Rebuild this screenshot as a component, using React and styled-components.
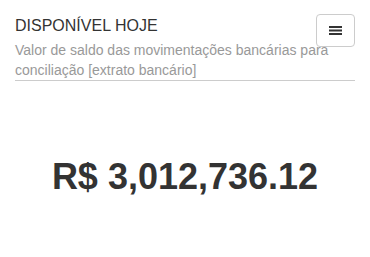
import * as React from 'react'
import styled, { createGlobalStyle } from 'styled-components'

const GlobalStyle = createGlobalStyle`
  html, body {
    margin: 0;
    padding: 0;
    background: #fff;
    font-family: "Liberation Sans", Arial, Helvetica, sans-serif;
    color: #333;
  }
`

const Panel = styled.section`
  padding: 10px 15px;
`

const Header = styled.header`
  position: relative;
  border-bottom: 1px solid #ccc;
  padding-top: 6px;
`

const Title = styled.h3`
  margin: 0;
  font-size: 16px;
  font-weight: 400;
  line-height: 20px;
  color: #333;
`

const Subtitle = styled.p`
  margin: 4px 0 0;
  font-size: 14px;
  line-height: 20px;
  color: #999;
`

const MenuButton = styled.button`
  position: absolute;
  top: 4px;
  right: 0;
  width: 39px;
  height: 33px;
  display: flex;
  align-items: center;
  justify-content: center;
  background: #fff;
  border: 1px solid #ccc;
  border-radius: 4px;
  padding: 0;
  cursor: pointer;
`

const Amount = styled.div`
  text-align: center;
  font-size: 36px;
  line-height: 41px;
  font-weight: 700;
  color: #333;
  padding-top: 75px;
`

function BarsIcon () {
  return (
    <svg width='13' height='9' viewBox='0 0 13 9'>
      <rect x='0' y='0' width='13' height='2' fill='#333' />
      <rect x='0' y='3.5' width='13' height='2' fill='#333' />
      <rect x='0' y='7' width='13' height='2' fill='#333' />
    </svg>
  )
}

export default function App () {
  return (
    <>
      <GlobalStyle />
      <Panel>
        <Header>
          <Title>DISPONÍVEL HOJE</Title>
          <Subtitle>
            Valor de saldo das movimentações bancárias para conciliação [extrato bancário]
          </Subtitle>
          <MenuButton aria-label='Menu'>
            <BarsIcon />
          </MenuButton>
        </Header>
        <Amount>R$ 3,012,736.12</Amount>
      </Panel>
    </>
  )
}
